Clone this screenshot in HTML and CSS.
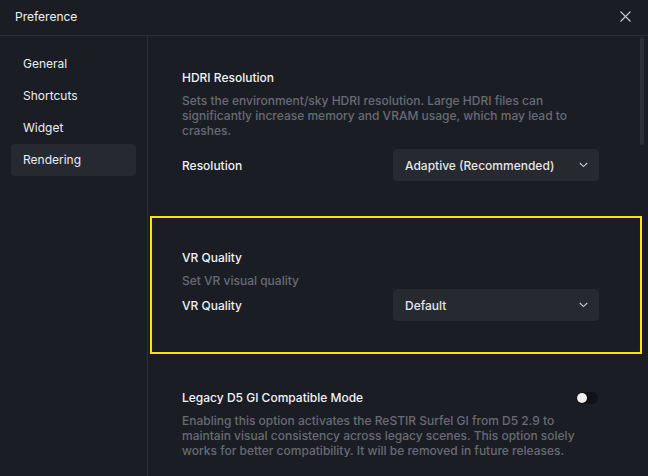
FILE: index.html
```html
<!DOCTYPE html>
<html lang="en">
<head>
	<meta charset="UTF-8">
	<title>Preference</title>
	<link rel="stylesheet" href="styles.css">
</head>
<body>
	<div class="window">
		<div class="titlebar">
			<span class="title">Preference</span>
			<span class="close">
				<svg width="11" height="11" viewBox="0 0 11 11"><path d="M0.5 0.5 L10.5 10.5 M10.5 0.5 L0.5 10.5" stroke="#c9cbd0" stroke-width="1.1" fill="none"/></svg>
			</span>
		</div>
		<div class="main">
			<div class="sidebar">
				<div class="navitem">General</div>
				<div class="navitem">Shortcuts</div>
				<div class="navitem">Widget</div>
				<div class="navitem active">Rendering</div>
			</div>
			<div class="content">
				<div class="section first">
					<div class="sectiontitle">HDRI Resolution</div>
					<div class="desc spaced">Sets the environment/sky HDRI resolution. Large HDRI files can significantly increase memory and VRAM usage, which may lead to crashes.</div>
					<div class="row">
						<span class="label">Resolution</span>
						<div class="select">
							<span>Adaptive (Recommended)</span>
							<svg width="9" height="6" viewBox="0 0 9 6"><path d="M0.8 1 L4.5 4.6 L8.2 1" stroke="#c9cbd0" stroke-width="1.1" fill="none"/></svg>
						</div>
					</div>
				</div>
				<div class="section highlight">
					<div class="sectiontitle">VR Quality</div>
					<div class="desc tight">Set VR visual quality</div>
					<div class="row">
						<span class="label">VR Quality</span>
						<div class="select">
							<span>Default</span>
							<svg width="9" height="6" viewBox="0 0 9 6"><path d="M0.8 1 L4.5 4.6 L8.2 1" stroke="#c9cbd0" stroke-width="1.1" fill="none"/></svg>
						</div>
					</div>
				</div>
				<div class="section lower">
					<div class="sectiontitle withtoggle">
						<span>Legacy D5 GI Compatible Mode</span>
						<span class="toggle"><span class="knob"></span></span>
					</div>
					<div class="desc">Enabling this option activates the ReSTIR Surfel GI from D5 2.9 to maintain visual consistency across legacy scenes. This option solely works for better compatibility. It will be removed in future releases.</div>
				</div>
			</div>
			<div class="scrollbar"><div class="thumb"></div></div>
		</div>
	</div>
</body>
</html>
```

FILE: styles.css
```css
body {
	margin: 0;
	background-color: #1b1d25;
	font-family: Inter, "Noto Sans", sans-serif;
	font-size: 12px;
	color: #e6e7ea;
}

.window {
	width: 648px;
	height: 476px;
	display: flex;
	flex-direction: column;
	overflow: hidden;
	background-color: #1b1d25;
}

.titlebar {
	height: 36px;
	flex-shrink: 0;
	display: flex;
	align-items: center;
	justify-content: space-between;
	padding: 0 17px 3px 15px;
	box-sizing: border-box;
	border-bottom: 1px solid #2b2e36;
}

.title {
	font-size: 12px;
	color: #f0f1f3;
}

.close {
	display: flex;
}

.main {
	flex: 1;
	display: flex;
	min-height: 0;
	position: relative;
}

.sidebar {
	width: 148px;
	flex-shrink: 0;
	border-right: 1px solid #2b2e36;
	padding: 12px 11px 0 11px;
	box-sizing: border-box;
}

.navitem {
	height: 32px;
	line-height: 32px;
	padding-left: 12px;
	border-radius: 4px;
	color: #eceef1;
}

.navitem.active {
	background-color: #262930;
}

.content {
	flex: 1;
	padding-left: 2px;
	padding-right: 6px;
}

.section {
	padding: 32px 41px 31px 30px;
	border: 2px solid transparent;
}

.section.first {
	padding-bottom: 33px;
}

.section.highlight {
	border-color: #ffe500;
}

.section.lower {
	padding-top: 34px;
}

.sectiontitle {
	line-height: 16px;
	font-weight: 500;
	color: #f2f3f5;
	margin-bottom: 7px;
}

.withtoggle {
	display: flex;
	justify-content: space-between;
	align-items: center;
}

.desc {
	line-height: 15px;
	color: #686b73;
	font-weight: 500;
}

.desc.spaced {
	margin-bottom: 11px;
}

.desc.tight {
	margin-bottom: 1px;
}

.row {
	display: flex;
	align-items: center;
	justify-content: space-between;
}

.label {
	font-weight: 500;
	color: #eef0f2;
}

.select {
	width: 206px;
	height: 32px;
	box-sizing: border-box;
	display: flex;
	align-items: center;
	justify-content: space-between;
	padding: 0 11px 0 12px;
	background-color: #262930;
	border-radius: 4px;
	font-weight: 500;
}

.toggle {
	width: 22px;
	height: 12px;
	margin-right: 1px;
	border-radius: 6px;
	background-color: #111218;
	display: flex;
	align-items: center;
	padding-left: 1px;
	box-sizing: border-box;
}

.knob {
	width: 10px;
	height: 10px;
	border-radius: 50%;
	background-color: #eeeeee;
}

.scrollbar {
	position: absolute;
	right: 4px;
	top: 1px;
	width: 4px;
	height: 100%;
}

.thumb {
	height: 108px;
	border-radius: 2px;
	background-color: #2c2f37;
}
```
